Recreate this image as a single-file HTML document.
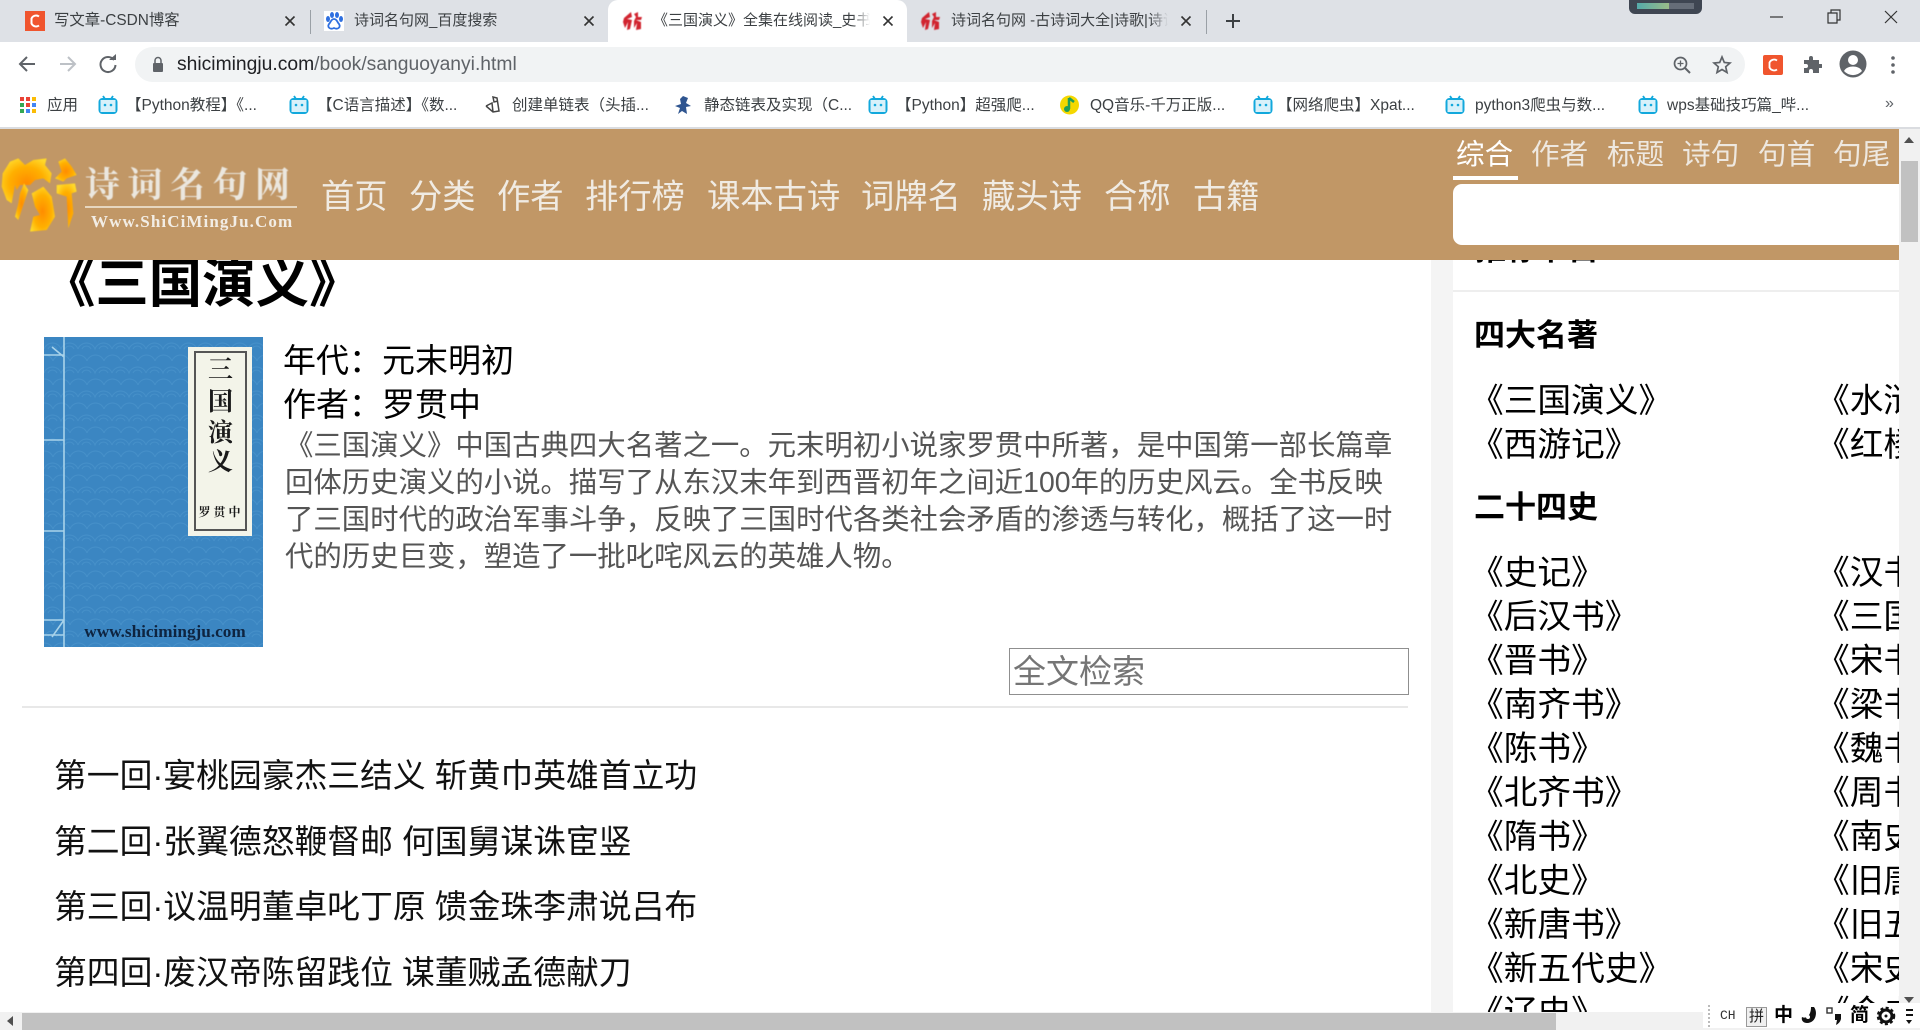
<!DOCTYPE html>
<html lang="zh-CN"><head><meta charset="utf-8"><title>《三国演义》全集在线阅读</title>
<style>
html,body{margin:0;padding:0;width:1920px;height:1030px;overflow:hidden;background:#fff}
body{position:relative;font-family:"Liberation Sans","Noto Sans CJK SC",sans-serif;color:#000}
.a{position:absolute;white-space:nowrap}
.t{position:absolute;white-space:nowrap;overflow:hidden;font-size:15px;line-height:22px;color:#3c4043;top:10px}
.b{position:absolute;white-space:nowrap;font-size:15.5px;line-height:20px;top:96px;color:#3c4043}
.n{position:absolute;white-space:nowrap;font-size:33.3px;line-height:44px;top:176px;color:#f0ebe3}
.s{position:absolute;white-space:nowrap;font-size:28.6px;line-height:36px;top:137px;color:#eee8e0}
.m{position:absolute;white-space:nowrap;font-size:33px;line-height:44px;left:283px;color:#000}
.d{position:absolute;white-space:nowrap;font-size:28.4px;line-height:36px;left:285px;color:#555}
.c{position:absolute;white-space:nowrap;font-size:32.8px;line-height:44px;left:54px;color:#111}
.r{position:absolute;white-space:nowrap;font-size:33.7px;line-height:44px;color:#000}
.h{position:absolute;white-space:nowrap;font-size:31px;font-weight:700;line-height:44px;left:1474px;color:#000}
svg{position:absolute;display:block}
</style></head><body>

<!-- page content -->
<div class="a" style="left:0;top:129px;width:1899px;height:883px;overflow:hidden;background:#fff"></div>
<div class="a" style="left:1431px;top:260px;width:22px;height:752px;background:#f4f4f4"></div>
<div class="a" style="left:1453px;top:290px;width:446px;height:2px;background:#eee"></div>

<div class="a" style="left:42px;top:249px;font-size:53.4px;font-weight:700;line-height:72px">《三国演义》</div>

<svg style="left:44px;top:337px" width="219" height="310" viewBox="0 0 219 310">
<defs><pattern id="w" width="34" height="24" patternUnits="userSpaceOnUse"><path d="M0 12a9 9 0 0 1 17 0a9 9 0 0 1 17 0M-8 24a9 9 0 0 1 17 0a9 9 0 0 1 17 0a9 9 0 0 1 17 0M4 12a5 5 0 0 1 9 0M21 12a5 5 0 0 1 9 0" fill="none" stroke="#4690c9" stroke-width="1"/></pattern></defs>
<rect width="219" height="310" fill="#3b86c2"/><rect width="219" height="310" fill="url(#w)"/>
<path d="M20 0V310M0 18H20M0 103H20M0 194H20M0 283H20M0 298H20M8 10L20 20M8 300L20 283" stroke="#a9d3ea" stroke-width="1.6" fill="none"/>
<rect x="144" y="10" width="64" height="189" fill="#f3f4e9"/><rect x="151" y="15" width="51" height="178" fill="none" stroke="#555" stroke-width="2"/>
<text x="176.500" y="41" font-family="Noto Serif CJK SC,serif" font-weight="700" font-size="25" text-anchor="middle" fill="#1a1a1a">三</text>
<text x="176.500" y="73" font-family="Noto Serif CJK SC,serif" font-weight="700" font-size="25" text-anchor="middle" fill="#1a1a1a">国</text>
<text x="176.500" y="104" font-family="Noto Serif CJK SC,serif" font-weight="700" font-size="25" text-anchor="middle" fill="#1a1a1a">演</text>
<text x="176.500" y="133" font-family="Noto Serif CJK SC,serif" font-weight="700" font-size="25" text-anchor="middle" fill="#1a1a1a">义</text>
<text x="177" y="179" font-family="Noto Serif CJK SC,serif" font-weight="700" font-size="12" text-anchor="middle" fill="#1a1a1a" letter-spacing="3">罗贯中</text>
<text x="121" y="300" font-family="Liberation Serif,serif" font-weight="700" font-size="17.200" text-anchor="middle" fill="#0e2440">www.shicimingju.com</text>
</svg>

<div class="m" style="top:339px">年代：元末明初</div>
<div class="m" style="top:383px">作者：罗贯中</div>
<div class="d" style="top:428px">《三国演义》中国古典四大名著之一。元末明初小说家罗贯中所著，是中国第一部长篇章</div>
<div class="d" style="top:465px">回体历史演义的小说。描写了从东汉末年到西晋初年之间近100年的历史风云。全书反映</div>
<div class="d" style="top:502px">了三国时代的政治军事斗争，反映了三国时代各类社会矛盾的渗透与转化，概括了这一时</div>
<div class="d" style="top:539px">代的历史巨变，塑造了一批叱咤风云的英雄人物。</div>

<div class="a" style="left:1009px;top:648px;width:398px;height:45px;border:1px solid #8f8f8f;background:#fff"></div>
<div class="a" style="left:1013px;top:650px;font-size:33px;line-height:44px;color:#757575">全文检索</div>
<div class="a" style="left:22px;top:706px;width:1386px;height:2px;background:#e8e8e8"></div>

<div class="c" style="top:754px">第一回·宴桃园豪杰三结义 斩黄巾英雄首立功</div>
<div class="c" style="top:820px">第二回·张翼德怒鞭督邮 何国舅谋诛宦竖</div>
<div class="c" style="top:885px">第三回·议温明董卓叱丁原 馈金珠李肃说吕布</div>
<div class="c" style="top:951px">第四回·废汉帝陈留践位 谋董贼孟德献刀</div>

<div class="a" style="left:1475px;top:228px;font-size:31px;font-weight:700;line-height:44px">推荐书目</div>
<div class="h" style="top:314px">四大名著</div>
<div class="h" style="top:486px">二十四史</div>
<div class="a" style="left:1470px;top:292px;width:429px;height:720px;overflow:hidden">
<div class="r" style="left:0;top:87px">《三国演义》</div><div class="r" style="left:346px;top:87px">《水浒传》</div>
<div class="r" style="left:0;top:131px">《西游记》</div><div class="r" style="left:346px;top:131px">《红楼梦》</div>
<div class="r" style="left:0;top:259px">《史记》</div><div class="r" style="left:346px;top:259px">《汉书》</div>
<div class="r" style="left:0;top:303px">《后汉书》</div><div class="r" style="left:346px;top:303px">《三国志》</div>
<div class="r" style="left:0;top:347px">《晋书》</div><div class="r" style="left:346px;top:347px">《宋书》</div>
<div class="r" style="left:0;top:391px">《南齐书》</div><div class="r" style="left:346px;top:391px">《梁书》</div>
<div class="r" style="left:0;top:435px">《陈书》</div><div class="r" style="left:346px;top:435px">《魏书》</div>
<div class="r" style="left:0;top:479px">《北齐书》</div><div class="r" style="left:346px;top:479px">《周书》</div>
<div class="r" style="left:0;top:523px">《隋书》</div><div class="r" style="left:346px;top:523px">《南史》</div>
<div class="r" style="left:0;top:567px">《北史》</div><div class="r" style="left:346px;top:567px">《旧唐书》</div>
<div class="r" style="left:0;top:611px">《新唐书》</div><div class="r" style="left:346px;top:611px">《旧五代史》</div>
<div class="r" style="left:0;top:655px">《新五代史》</div><div class="r" style="left:346px;top:655px">《宋史》</div>
<div class="r" style="left:0;top:699px">《辽史》</div><div class="r" style="left:346px;top:699px">《金史》</div>
</div>

<!-- site header -->
<div class="a" style="left:0;top:129px;width:1899px;height:131px;background:#c19766"></div>
<svg style="left:0;top:150px;filter:blur(.5px)" width="80" height="90" viewBox="0 0 240 270">
<defs><radialGradient id="g" cx=".5" cy=".55" r=".6"><stop offset="0" stop-color="#ff8c00"/><stop offset=".6" stop-color="#ffb000"/><stop offset="1" stop-color="#ffd92a"/></radialGradient></defs>
<g fill="url(#g)">
<path d="M8 70L30 35 55 25 75 45 100 30 140 25 135 45 155 70 150 100 130 85 105 90 90 105 60 105 50 120 45 105 35 160 20 150 5 110Z"/>
<path d="M60 130L72 100 85 120 70 165 55 210 45 200 55 160Z"/>
<path d="M95 130L130 110 155 140 165 200 140 240 90 245 100 200 120 195 105 170Z"/>
<path d="M175 35L195 25 215 50 230 75 200 85 190 95 165 85 185 65Z"/>
<path d="M170 105L225 100 230 125 215 130 220 190 205 235 200 140 170 130Z"/>
</g></svg>
<div class="a" style="left:85px;top:158px;font-family:'Noto Serif CJK SC',serif;font-weight:700;font-size:35px;letter-spacing:7.500px;line-height:50px;color:#ebe7df;filter:blur(.4px)">诗词名句网</div>
<div class="a" style="left:85px;top:206px;width:212px;height:2px;background:#e6d6bf"></div>
<div class="a" style="left:91px;top:211px;font-family:'Liberation Serif',serif;font-weight:700;font-size:17px;letter-spacing:1.100px;line-height:22px;color:#f2ede5">Www.ShiCiMingJu.Com</div>

<div class="n" style="left:321px">首页</div><div class="n" style="left:409px">分类</div><div class="n" style="left:497px">作者</div><div class="n" style="left:585px">排行榜</div><div class="n" style="left:707px">课本古诗</div><div class="n" style="left:861px">词牌名</div><div class="n" style="left:982px">藏头诗</div><div class="n" style="left:1104px">合称</div><div class="n" style="left:1193px">古籍</div>

<div class="s" style="left:1456px;color:#fff">综合</div><div class="s" style="left:1531px">作者</div><div class="s" style="left:1607px">标题</div><div class="s" style="left:1682px">诗句</div><div class="s" style="left:1758px">句首</div><div class="s" style="left:1833px">句尾</div>
<div class="a" style="left:1453px;top:176px;width:65px;height:4px;background:#fff"></div>
<div class="a" style="left:1453px;top:184px;width:446px;height:61px;background:#fff;border-radius:9px 0 0 9px"></div>

<!-- scrollbars -->
<div class="a" style="left:1899px;top:129px;width:21px;height:883px;background:#f1f1f1"></div>
<div class="a" style="left:1901px;top:161px;width:17px;height:81px;background:#c1c1c1"></div>
<div class="a" style="left:1904px;top:137px;width:0;height:0;border:5px solid transparent;border-top:0;border-bottom:6px solid #505050"></div>
<div class="a" style="left:1904px;top:997px;width:0;height:0;border:5px solid transparent;border-bottom:0;border-top:6px solid #505050"></div>
<div class="a" style="left:0;top:1012px;width:1920px;height:18px;background:#f1f1f1"></div>
<div class="a" style="left:22px;top:1013px;width:1534px;height:17px;background:#c1c1c1"></div>
<div class="a" style="left:7px;top:1016px;width:0;height:0;border:5px solid transparent;border-left:0;border-right:6px solid #505050"></div>

<!-- IME bar -->
<div class="a" style="left:1703px;top:1003px;width:217px;height:25px;background:#fff"></div>
<div class="a" style="left:1708px;top:1005px;height:22px;border-left:2px dotted #bbb"></div>
<div class="a" style="left:1720px;top:1007px;font-family:'Liberation Mono',monospace;font-size:13px;line-height:18px;color:#333">CH</div>
<div class="a" style="left:1746px;top:1007px;width:19px;height:18px;border:1px solid #999;background:#f0f0f0;font-size:15px;line-height:18px;text-align:center;color:#222">拼</div>
<div class="a" style="left:1774px;top:1005px;font-size:19px;font-weight:700;line-height:22px">中</div>
<svg style="left:1800px;top:1006px" width="20" height="20" viewBox="0 0 20 20"><path d="M11 1H14C18 6 16 17 7 17 3 17 1 14 2 11 6 13 11 10 11 1Z" fill="#111"/><circle cx="8" cy="11" r="2" fill="#fff"/></svg>
<svg style="left:1826px;top:1006px" width="16" height="20" viewBox="0 0 16 20"><rect x="1" y="2" width="5" height="5" fill="none" stroke="#333" stroke-width="1.400"/><path d="M9 8h6v5q-1 4-5 6l1-5h-2z" fill="#111"/></svg>
<div class="a" style="left:1850px;top:1005px;font-size:19px;font-weight:700;line-height:22px">简</div>
<svg style="left:1876px;top:1006px" width="20" height="20" viewBox="0 0 20 20"><circle cx="10" cy="10" r="6" fill="none" stroke="#111" stroke-width="3"/><circle cx="10" cy="10" r="8" fill="none" stroke="#111" stroke-width="2.500" stroke-dasharray="3 2.300"/><circle cx="10" cy="10" r="1.500" fill="#111"/></svg>
<div class="a" style="left:1906px;top:1009px;width:7px;height:2px;background:#111"></div>
<div class="a" style="left:1906px;top:1014px;width:7px;height:2px;background:#111"></div>
<div class="a" style="left:1906px;top:1020px;width:0;height:0;border:3.500px solid transparent;border-top:4px solid #111;border-bottom:0"></div>

<!-- chrome -->
<div class="a" style="left:0;top:0;width:1920px;height:42px;background:#dee1e6"></div>
<div class="a" style="left:0;top:42px;width:1920px;height:85px;background:#fff"></div>
<div class="a" style="left:0;top:127px;width:1920px;height:2px;background:#dadce0"></div>

<svg style="left:25px;top:11px" width="20" height="20" viewBox="0 0 20 20"><rect width="20" height="20" fill="#f0552e"/><path d="M14 5.500A5 5 0 0 0 6.500 7.500V12.500A5 5 0 0 0 14 14.500" fill="none" stroke="#fff" stroke-width="2"/></svg>
<div class="t" style="left:54px;width:225px;font-size:15.400px">写文章-CSDN博客</div>
<svg style="left:284px;top:15px" width="12" height="12" viewBox="0 0 12 12"><path d="M1.500 1.500L10.500 10.500M10.500 1.500L1.500 10.500" stroke="#333" stroke-width="1.600"/></svg>
<div class="a" style="left:310px;top:10px;width:1px;height:24px;background:#9aa0a6"></div>

<svg style="left:324px;top:11px" width="20" height="20" viewBox="0 0 20 20"><rect width="20" height="20" fill="#fff"/><ellipse cx="4" cy="8" rx="2" ry="3" fill="#2e6fe0"/><ellipse cx="8" cy="4" rx="2" ry="3" fill="#2e6fe0"/><ellipse cx="13" cy="4" rx="2" ry="3" fill="#2e6fe0"/><ellipse cx="17" cy="8" rx="2" ry="3" fill="#2e6fe0"/><path d="M10 8c-3 0-3 3-5 5-2 3 1 6 5 4 4 2 7-1 5-4-2-2-2-5-5-5z" fill="none" stroke="#2e6fe0" stroke-width="1.800"/></svg>
<div class="t" style="left:354px;width:225px">诗词名句网_百度搜索</div>
<svg style="left:583px;top:15px" width="12" height="12" viewBox="0 0 12 12"><path d="M1.500 1.500L10.500 10.500M10.500 1.500L1.500 10.500" stroke="#333" stroke-width="1.600"/></svg>

<div class="a" style="left:608px;top:0;width:299px;height:42px;background:#fff;border-radius:10px 10px 0 0"></div>
<svg style="left:623px;top:11px;filter:blur(.4px)" width="20" height="20" viewBox="0 0 20 20"><path d="M1 7L8 1 9 6 4 8 9 9 7 18 4 19 5 11 2 17 0 11ZM11 3L15 1 15 6 19 6 18 9 13 9 18 11 18 18 13 19 14 12 11 17 11 10 13 6Z" fill="#d1242f"/></svg>
<div class="t" style="left:653px;width:217px;-webkit-mask-image:linear-gradient(90deg,#000 92%,transparent);mask-image:linear-gradient(90deg,#000 92%,transparent)">《三国演义》全集在线阅读_史书</div>
<svg style="left:882px;top:15px" width="12" height="12" viewBox="0 0 12 12"><path d="M1.500 1.500L10.500 10.500M10.500 1.500L1.500 10.500" stroke="#333" stroke-width="1.600"/></svg>

<svg style="left:921px;top:11px;filter:blur(.4px)" width="20" height="20" viewBox="0 0 20 20"><path d="M1 7L8 1 9 6 4 8 9 9 7 18 4 19 5 11 2 17 0 11ZM11 3L15 1 15 6 19 6 18 9 13 9 18 11 18 18 13 19 14 12 11 17 11 10 13 6Z" fill="#d1242f"/></svg>
<div class="t" style="left:951px;width:217px;-webkit-mask-image:linear-gradient(90deg,#000 92%,transparent);mask-image:linear-gradient(90deg,#000 92%,transparent)">诗词名句网 -古诗词大全|诗歌|诗词</div>
<svg style="left:1180px;top:15px" width="12" height="12" viewBox="0 0 12 12"><path d="M1.500 1.500L10.500 10.500M10.500 1.500L1.500 10.500" stroke="#333" stroke-width="1.600"/></svg>
<div class="a" style="left:1206px;top:10px;width:1px;height:24px;background:#9aa0a6"></div>
<svg style="left:1224px;top:12px" width="18" height="18" viewBox="0 0 18 18"><path d="M9 2V16M2 9H16" stroke="#3c4043" stroke-width="2"/></svg>

<div class="a" style="left:1629px;top:0;width:73px;height:14px;background:#3f4652;border-radius:0 0 6px 6px"></div>
<div class="a" style="left:1637px;top:3px;width:32px;height:6px;background:linear-gradient(90deg,#5aa,#9b8)"></div>
<div class="a" style="left:1669px;top:3px;width:25px;height:6px;background:#666d78"></div>
<svg style="left:1760px;top:8px" width="140" height="20" viewBox="0 0 140 20"><path d="M10 9H23" stroke="#333" stroke-width="1.200"/><path d="M68 5H77V15H68ZM71 5V2H80V12H77" fill="none" stroke="#333" stroke-width="1.200"/><path d="M125 3L137 15M137 3L125 15" stroke="#333" stroke-width="1.200"/></svg>

<svg style="left:18px;top:54px" width="100" height="20" viewBox="0 0 100 20"><path d="M17 10H3M9 3L2 10 9 17" fill="none" stroke="#5f6368" stroke-width="2"/><path d="M42 10H56M50 3L57 10 50 17" fill="none" stroke="#bdc1c6" stroke-width="2"/><path d="M96 6A7.500 7.500 0 1 0 97.500 11" fill="none" stroke="#5f6368" stroke-width="2"/><path d="M91 6H98V0Z" fill="#5f6368"/></svg>
<div class="a" style="left:135px;top:47px;width:1610px;height:35px;background:#f1f3f4;border-radius:18px"></div>
<svg style="left:151px;top:56px" width="14" height="17" viewBox="0 0 14 17"><path d="M4 7V4.500A3 3 0 0 1 10 4.500V7" fill="none" stroke="#5f6368" stroke-width="1.500"/><rect x="2" y="7" width="10" height="9" rx="1" fill="#5f6368"/></svg>
<div class="a" style="left:177px;top:52px;font-size:19.300px;line-height:25px;color:#5f6368"><span style="color:#202124">shicimingju.com</span>/book/sanguoyanyi.html</div>
<svg style="left:1672px;top:55px" width="20" height="20" viewBox="0 0 20 20"><circle cx="8.500" cy="8.500" r="6" fill="none" stroke="#5f6368" stroke-width="1.700"/><path d="M13 13L18 18" stroke="#5f6368" stroke-width="2"/><path d="M8.500 5.500V11.500M5.500 8.500H11.500" stroke="#5f6368" stroke-width="1.300"/></svg>
<svg style="left:1712px;top:55px" width="20" height="20" viewBox="0 0 20 20"><path d="M10 2L12.300 7.500 18 8 13.700 11.800 15 17.500 10 14.500 5 17.500 6.300 11.800 2 8 7.700 7.500Z" fill="none" stroke="#5f6368" stroke-width="1.700"/></svg>
<svg style="left:1763px;top:55px" width="20" height="20" viewBox="0 0 20 20"><rect width="20" height="20" rx="2" fill="#f0552e"/><path d="M14 5.500A5 5 0 0 0 6.500 7.500V12.500A5 5 0 0 0 14 14.500" fill="none" stroke="#fff" stroke-width="1.800"/></svg>
<svg style="left:1802px;top:54px" width="20" height="20" viewBox="0 0 20 20"><path d="M2 6H7V4A2 2 0 0 1 11 4V6H17V10H19A2 2 0 0 1 19 14H17V19H11V17A2 2 0 0 0 7 17V19H2V14H4A2 2 0 0 0 4 10H2Z" fill="#5f6368"/></svg>
<svg style="left:1839px;top:50px" width="28" height="28" viewBox="0 0 28 28"><circle cx="14" cy="14" r="13.500" fill="#5f6368"/><circle cx="14" cy="10" r="5" fill="#fff"/><path d="M5 21C8 15 20 15 23 21A12 12 0 0 1 5 21Z" fill="#fff"/></svg>
<svg style="left:1890px;top:55px" width="6" height="20" viewBox="0 0 6 20"><circle cx="3" cy="3" r="1.800" fill="#5f6368"/><circle cx="3" cy="10" r="1.800" fill="#5f6368"/><circle cx="3" cy="17" r="1.800" fill="#5f6368"/></svg>

<!-- bookmarks -->
<svg style="left:20px;top:97px" width="17" height="17" viewBox="0 0 17 17"><rect width="4" height="4" x="0" y="0" fill="#ea4335"/><rect width="4" height="4" x="6" y="0" fill="#ea4335"/><rect width="4" height="4" x="12" y="0" fill="#fbbc05"/><rect width="4" height="4" x="0" y="6" fill="#34a853"/><rect width="4" height="4" x="6" y="6" fill="#ea4335"/><rect width="4" height="4" x="12" y="6" fill="#4285f4"/><rect width="4" height="4" x="0" y="12" fill="#34a853"/><rect width="4" height="4" x="6" y="12" fill="#4285f4"/><rect width="4" height="4" x="12" y="12" fill="#fbbc05"/></svg>
<div class="b" style="left:47px">应用</div>

<svg style="left:98px;top:95px" width="20" height="20" viewBox="0 0 20 20"><path d="M5 1L7 4M15 1L13 4" stroke="#12a8dc" stroke-width="1.800"/><rect x="1.500" y="4" width="17" height="14" rx="3" fill="none" stroke="#12a8dc" stroke-width="2"/><rect x="2.500" y="5" width="15" height="12" fill="#d8f1fa"/><circle cx="7" cy="10" r="1.300" fill="#12a8dc"/><circle cx="13" cy="10" r="1.300" fill="#12a8dc"/></svg>
<div class="b" style="left:126px">【Python教程】《...</div>
<svg style="left:289px;top:95px" width="20" height="20" viewBox="0 0 20 20"><path d="M5 1L7 4M15 1L13 4" stroke="#12a8dc" stroke-width="1.800"/><rect x="1.500" y="4" width="17" height="14" rx="3" fill="none" stroke="#12a8dc" stroke-width="2"/><rect x="2.500" y="5" width="15" height="12" fill="#d8f1fa"/><circle cx="7" cy="10" r="1.300" fill="#12a8dc"/><circle cx="13" cy="10" r="1.300" fill="#12a8dc"/></svg>
<div class="b" style="left:317px">【C语言描述】《数...</div>
<svg style="left:484px;top:95px" width="18" height="20" viewBox="0 0 18 20"><path d="M2 11L9 17 15 16 13 3 9 2 10 7 14 6M2 11L8 8 9 17" fill="none" stroke="#444" stroke-width="1.500"/></svg>
<div class="b" style="left:512px">创建单链表（头插...</div>
<svg style="left:674px;top:95px" width="19" height="20" viewBox="0 0 19 20"><path d="M9 1L14 3 12 8 17 11 12 12 13 19 8 16 4 19 6 13 1 11 7 9 6 4Z" fill="#2f5590"/></svg>
<div class="b" style="left:704px">静态链表及实现（C...</div>
<svg style="left:868px;top:95px" width="20" height="20" viewBox="0 0 20 20"><path d="M5 1L7 4M15 1L13 4" stroke="#12a8dc" stroke-width="1.800"/><rect x="1.500" y="4" width="17" height="14" rx="3" fill="none" stroke="#12a8dc" stroke-width="2"/><rect x="2.500" y="5" width="15" height="12" fill="#d8f1fa"/><circle cx="7" cy="10" r="1.300" fill="#12a8dc"/><circle cx="13" cy="10" r="1.300" fill="#12a8dc"/></svg>
<div class="b" style="left:896px">【Python】超强爬...</div>
<svg style="left:1060px;top:95px" width="19" height="20" viewBox="0 0 19 20"><circle cx="9.500" cy="10" r="9.500" fill="#f5d800"/><path d="M9 3L9 14M9 3L14 7" stroke="#1f9e5a" stroke-width="2.500" fill="none"/><circle cx="7" cy="14" r="3" fill="#1f9e5a"/></svg>
<div class="b" style="left:1090px">QQ音乐-千万正版...</div>
<svg style="left:1253px;top:95px" width="20" height="20" viewBox="0 0 20 20"><path d="M5 1L7 4M15 1L13 4" stroke="#12a8dc" stroke-width="1.800"/><rect x="1.500" y="4" width="17" height="14" rx="3" fill="none" stroke="#12a8dc" stroke-width="2"/><rect x="2.500" y="5" width="15" height="12" fill="#d8f1fa"/><circle cx="7" cy="10" r="1.300" fill="#12a8dc"/><circle cx="13" cy="10" r="1.300" fill="#12a8dc"/></svg>
<div class="b" style="left:1277px">【网络爬虫】Xpat...</div>
<svg style="left:1445px;top:95px" width="20" height="20" viewBox="0 0 20 20"><path d="M5 1L7 4M15 1L13 4" stroke="#12a8dc" stroke-width="1.800"/><rect x="1.500" y="4" width="17" height="14" rx="3" fill="none" stroke="#12a8dc" stroke-width="2"/><rect x="2.500" y="5" width="15" height="12" fill="#d8f1fa"/><circle cx="7" cy="10" r="1.300" fill="#12a8dc"/><circle cx="13" cy="10" r="1.300" fill="#12a8dc"/></svg>
<div class="b" style="left:1475px">python3爬虫与数...</div>
<svg style="left:1638px;top:95px" width="20" height="20" viewBox="0 0 20 20"><path d="M5 1L7 4M15 1L13 4" stroke="#12a8dc" stroke-width="1.800"/><rect x="1.500" y="4" width="17" height="14" rx="3" fill="none" stroke="#12a8dc" stroke-width="2"/><rect x="2.500" y="5" width="15" height="12" fill="#d8f1fa"/><circle cx="7" cy="10" r="1.300" fill="#12a8dc"/><circle cx="13" cy="10" r="1.300" fill="#12a8dc"/></svg>
<div class="b" style="left:1667px">wps基础技巧篇_哔...</div>
<div class="b" style="left:1885px;top:94px;font-size:16px;color:#5f6368">»</div>

</body></html>
